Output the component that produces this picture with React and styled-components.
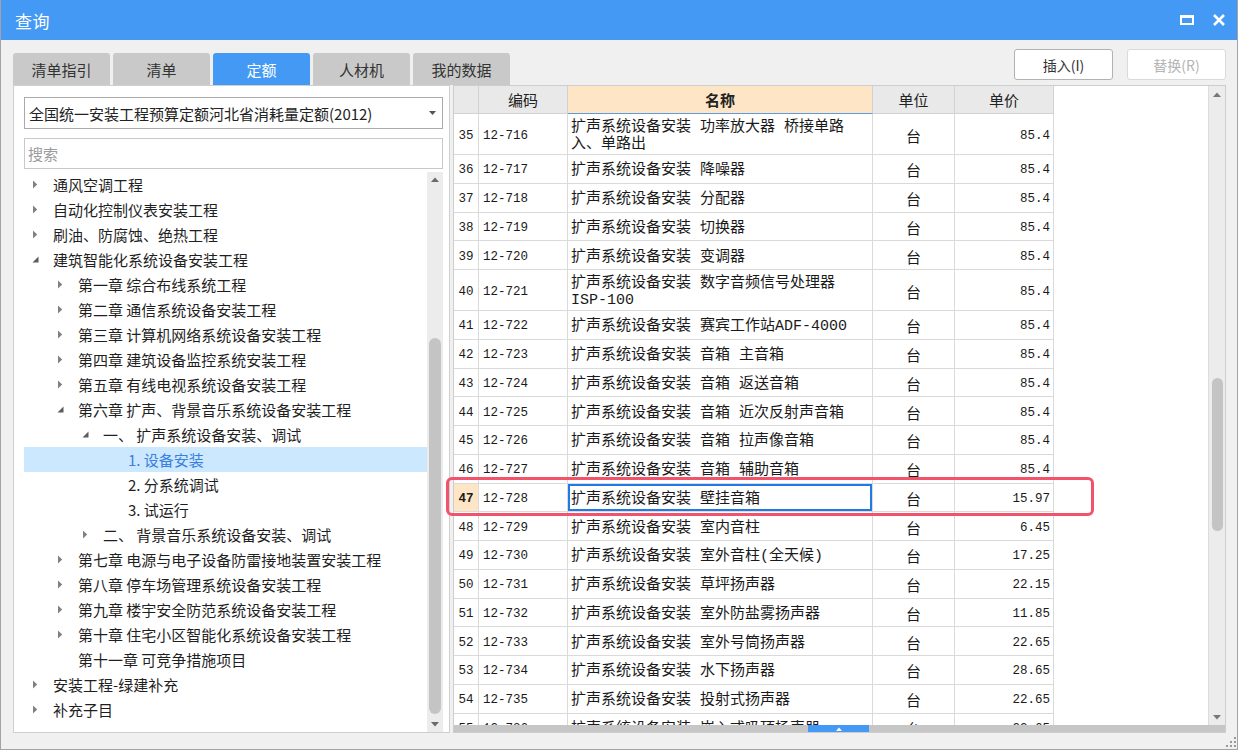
import React from 'react'
import styled, { createGlobalStyle } from 'styled-components'

const GlobalStyle = createGlobalStyle`
  html, body {
    margin: 0;
    padding: 0;
    background: #f0f0f0;
  }
  body {
    font-family: "Noto Sans CJK SC", "Noto Sans", sans-serif;
    color: #222;
  }
  * { box-sizing: border-box; }
`

const Window = styled.div`
  width: 1238px;
  height: 750px;
  display: flex;
  flex-direction: column;
  background: #f0f0f0;
  border: 1px solid #a3a3a3;
  border-top: none;
  overflow: hidden;
  position: relative;
`

const TitleBar = styled.div`
  height: 40px;
  flex: none;
  display: flex;
  align-items: center;
  justify-content: space-between;
  background: #4499f5;
  padding: 0 12px 0 14px;
`

const Title = styled.div`
  color: #fff;
  font-size: 17px;
  letter-spacing: 0.5px;
`

const WinButtons = styled.div`
  display: flex;
  align-items: center;
  gap: 19px;
`

const Body = styled.div`
  flex: 1;
  display: flex;
  flex-direction: column;
  padding: 9px 11px 16px 12px;
  min-height: 0;
`

const TopRow = styled.div`
  height: 36px;
  flex: none;
  display: flex;
  justify-content: space-between;
  align-items: flex-start;
`

const Tabs = styled.div`
  display: flex;
  gap: 3px;
  align-self: flex-end;
`

const Tab = styled.div`
  width: 97px;
  height: 32px;
  display: flex;
  align-items: center;
  justify-content: center;
  font-size: 15px;
  border-radius: 3px 3px 0 0;
  background: ${p => (p.$active ? '#4499f5' : '#c9c9c9')};
  color: ${p => (p.$active ? '#fff' : '#333')};
`

const Actions = styled.div`
  display: flex;
  gap: 14px;
`

const ActionButton = styled.div`
  width: 99px;
  height: 31px;
  display: flex;
  align-items: center;
  justify-content: center;
  font-size: 14px;
  background: #fff;
  border-radius: 3px;
  border: 1px solid ${p => (p.$disabled ? '#dadada' : '#b2b2b2')};
  color: ${p => (p.$disabled ? '#b4b4b4' : '#333')};
`

const Main = styled.div`
  flex: 1;
  display: flex;
  gap: 3px;
  min-height: 0;
  position: relative;
`

const LeftPanel = styled.div`
  width: 437px;
  flex: none;
  display: flex;
  flex-direction: column;
  background: #fff;
  border: 1px solid #cfcfcf;
  padding: 11px 6px 0 10px;
`

const Select = styled.div`
  height: 32px;
  flex: none;
  display: flex;
  align-items: center;
  justify-content: space-between;
  border: 1px solid #aaaaaa;
  padding: 0 6px 0 4px;
  font-size: 15px;
  color: #222;
`

const SearchBox = styled.div`
  height: 31px;
  flex: none;
  margin-top: 9px;
  display: flex;
  align-items: center;
  border: 1px solid #c9c9c9;
  padding-left: 3px;
  font-size: 15px;
  color: #9b9b9b;
`

const TreeArea = styled.div`
  flex: 1;
  display: flex;
  margin-top: 3px;
  min-height: 0;
`

const TreeList = styled.div`
  flex: 1;
  overflow: hidden;
`

const TreeRow = styled.div`
  height: 25px;
  display: flex;
  align-items: center;
  padding-left: ${p => p.$level * 25}px;
  font-size: 15px;
  white-space: nowrap;
  background: ${p => (p.$selected ? '#cce8ff' : 'transparent')};
  color: ${p => (p.$selected ? '#3a80de' : '#1f1f1f')};
`

const Twisty = styled.span`
  width: 22px;
  flex: none;
  display: flex;
  align-items: center;
  justify-content: center;
`

const TreeText = styled.span`
  margin-left: 7px;
`

const ScrollBar = styled.div`
  width: ${p => p.$w}px;
  flex: none;
  display: flex;
  flex-direction: column;
  background: #ececec;
  border-left: ${p => (p.$line ? '1px solid #dcdcdc' : 'none')};
`

const ArrowBox = styled.div`
  height: ${p => p.$h}px;
  flex: none;
  display: flex;
  align-items: center;
  justify-content: center;
`

const Track = styled.div`
  flex: 1;
  display: flex;
  flex-direction: column;
  align-items: center;
  min-height: 0;
`

const Thumb = styled.div`
  width: ${p => p.$w}px;
  height: ${p => p.$h}px;
  margin-top: ${p => p.$top}px;
  border-radius: 6px;
  background: #c4c4c4;
`

const RightPanel = styled.div`
  flex: 1;
  display: flex;
  flex-direction: column;
  background: #fff;
  border: 1px solid #cdcdcd;
  min-width: 0;
`

const GridArea = styled.div`
  flex: 1;
  display: flex;
  min-height: 0;
`

const TableWrap = styled.div`
  flex: 1;
  overflow: hidden;
`

const cols = '25px 89px 305px 82px 99px'

const HeaderRow = styled.div`
  display: grid;
  grid-template-columns: ${cols};
  height: 28px;
`

const HeadCell = styled.div`
  display: flex;
  align-items: center;
  justify-content: center;
  font-size: 15px;
  color: #222;
  background: ${p => (p.$active ? '#fde5c6' : '#e9e9e9')};
  font-weight: ${p => (p.$active ? 700 : 400)};
  border-right: 1px solid #d2d2d2;
  border-bottom: 1px solid ${p => (p.$active ? '#5a9be6' : '#d2d2d2')};
`

const Row = styled.div`
  display: grid;
  grid-template-columns: ${cols};
  height: ${p => p.$h}px;
`

const Cell = styled.div`
  display: flex;
  align-items: center;
  justify-content: ${p => p.$align || 'flex-start'};
  padding: 4px ${p => p.$pr || 3}px 0 ${p => p.$pl || 3}px;
  border-right: 1px solid #dadada;
  border-bottom: 1px solid #dadada;
  overflow: hidden;
  white-space: pre-line;
  line-height: 17px;
  color: #1a1a1a;
`

const NumCell = styled(Cell)`
  font-family: "Liberation Mono", monospace;
  font-size: 12.5px;
  padding: 4px 0 0;
  background: ${p => (p.$current ? '#fde5c6' : '#fff')};
  font-weight: ${p => (p.$current ? 700 : 400)};
`

const MonoCell = styled(Cell)`
  font-family: "Liberation Mono", monospace;
  font-size: 12.5px;
`

const NameCell = styled(Cell)`
  font-family: "Liberation Mono", "Noto Sans CJK SC", monospace;
  font-size: 15px;
  box-shadow: ${p => (p.$focus ? 'inset 0 0 0 2px #1f7ae6' : 'none')};
`

const UnitCell = styled(Cell)`
  font-size: 15px;
  padding-top: 2px;
`

const HScroll = styled.div`
  height: 7px;
  flex: none;
  background: #c6c6c6;
  display: flex;
`

const HThumb = styled.div`
  width: 61px;
  margin-left: 354px;
  background: #4499f5;
  display: flex;
  align-items: center;
  justify-content: center;
`

const Highlight = styled.div`
  position: absolute;
  left: 433px;
  top: 392px;
  width: 648px;
  height: 39px;
  border: 3px solid #f2536b;
  border-radius: 6px;
  pointer-events: none;
`

const Grip = styled.svg`
  position: absolute;
  right: 1px;
  bottom: 2px;
`

const Closed = () => (
  <svg width="6" height="9" viewBox="0 0 6 9">
    <path d="M1 0.5 L5.2 4.5 L1 8.5 Z" fill="#808080" />
  </svg>
)

const Opened = () => (
  <svg width="7" height="7" viewBox="0 0 7 7">
    <path d="M6.5 0.5 L6.5 6.5 L0.5 6.5 Z" fill="#5c5c5c" />
  </svg>
)

const Tri = ({ dir, color = '#6a6a6a', w = 8 }) => (
  <svg width={w} height={w / 2 + 1} viewBox="0 0 8 5">
    {dir === 'up'
      ? <path d="M0 5 L4 0.5 L8 5 Z" fill={color} />
      : <path d="M0 0 L8 0 L4 4.5 Z" fill={color} />}
  </svg>
)

const treeItems = [
  { level: 0, text: '通风空调工程', arrow: 'closed' },
  { level: 0, text: '自动化控制仪表安装工程', arrow: 'closed' },
  { level: 0, text: '刷油、防腐蚀、绝热工程', arrow: 'closed' },
  { level: 0, text: '建筑智能化系统设备安装工程', arrow: 'open' },
  { level: 1, text: '第一章 综合布线系统工程', arrow: 'closed' },
  { level: 1, text: '第二章 通信系统设备安装工程', arrow: 'closed' },
  { level: 1, text: '第三章 计算机网络系统设备安装工程', arrow: 'closed' },
  { level: 1, text: '第四章 建筑设备监控系统安装工程', arrow: 'closed' },
  { level: 1, text: '第五章 有线电视系统设备安装工程', arrow: 'closed' },
  { level: 1, text: '第六章 扩声、背景音乐系统设备安装工程', arrow: 'open' },
  { level: 2, text: '一、 扩声系统设备安装、调试', arrow: 'open' },
  { level: 3, text: '1. 设备安装', selected: true },
  { level: 3, text: '2. 分系统调试' },
  { level: 3, text: '3. 试运行' },
  { level: 2, text: '二、 背景音乐系统设备安装、调试', arrow: 'closed' },
  { level: 1, text: '第七章 电源与电子设备防雷接地装置安装工程', arrow: 'closed' },
  { level: 1, text: '第八章 停车场管理系统设备安装工程', arrow: 'closed' },
  { level: 1, text: '第九章 楼宇安全防范系统设备安装工程', arrow: 'closed' },
  { level: 1, text: '第十章 住宅小区智能化系统设备安装工程', arrow: 'closed' },
  { level: 1, text: '第十一章 可竞争措施项目' },
  { level: 0, text: '安装工程-绿建补充', arrow: 'closed' },
  { level: 0, text: '补充子目', arrow: 'closed' },
]

const P = '扩声系统设备安装 '

const rows = [
  [35, '12-716', P + '功率放大器 桥接单路\n入、单路出', '85.4', true],
  [36, '12-717', P + '降噪器', '85.4'],
  [37, '12-718', P + '分配器', '85.4'],
  [38, '12-719', P + '切换器', '85.4'],
  [39, '12-720', P + '变调器', '85.4'],
  [40, '12-721', P + '数字音频信号处理器\nISP-100', '85.4', true],
  [41, '12-722', P + '赛宾工作站ADF-4000', '85.4'],
  [42, '12-723', P + '音箱 主音箱', '85.4'],
  [43, '12-724', P + '音箱 返送音箱', '85.4'],
  [44, '12-725', P + '音箱 近次反射声音箱', '85.4'],
  [45, '12-726', P + '音箱 拉声像音箱', '85.4'],
  [46, '12-727', P + '音箱 辅助音箱', '85.4'],
  [47, '12-728', P + '壁挂音箱', '15.97'],
  [48, '12-729', P + '室内音柱', '6.45'],
  [49, '12-730', P + '室外音柱(全天候)', '17.25'],
  [50, '12-731', P + '草坪扬声器', '22.15'],
  [51, '12-732', P + '室外防盐雾扬声器', '11.85'],
  [52, '12-733', P + '室外号筒扬声器', '22.65'],
  [53, '12-734', P + '水下扬声器', '28.65'],
  [54, '12-735', P + '投射式扬声器', '22.65'],
  [55, '12-736', P + '嵌入式吸顶扬声器', '22.65'],
]

const App = () => {
  return (
    <Window>
      <GlobalStyle />
      <TitleBar>
        <Title>查询</Title>
        <WinButtons>
          <svg width="14" height="10" viewBox="0 0 14 10">
            <rect x="1" y="1.5" width="12" height="7.5" fill="none" stroke="#fff" strokeWidth="2" />
            <rect x="0" y="0" width="14" height="3" fill="#fff" />
          </svg>
          <svg width="12" height="12" viewBox="0 0 12 12">
            <path d="M1 1 L11 11 M11 1 L1 11" stroke="#fff" strokeWidth="2.6" />
          </svg>
        </WinButtons>
      </TitleBar>

      <Body>
        <TopRow>
          <Tabs>
            <Tab>清单指引</Tab>
            <Tab>清单</Tab>
            <Tab $active>定额</Tab>
            <Tab>人材机</Tab>
            <Tab>我的数据</Tab>
          </Tabs>
          <Actions>
            <ActionButton>插入(I)</ActionButton>
            <ActionButton $disabled>替换(R)</ActionButton>
          </Actions>
        </TopRow>

        <Main>
          <LeftPanel>
            <Select>
              <span>全国统一安装工程预算定额河北省消耗量定额(2012)</span>
              <Tri dir="down" color="#555" w={7} />
            </Select>
            <SearchBox>搜索</SearchBox>
            <TreeArea>
              <TreeList>
                {treeItems.map((t, i) => (
                  <TreeRow key={i} $level={t.level} $selected={t.selected}>
                    <Twisty>
                      {t.arrow === 'closed' && <Closed />}
                      {t.arrow === 'open' && <Opened />}
                    </Twisty>
                    <TreeText>{t.text}</TreeText>
                  </TreeRow>
                ))}
              </TreeList>
              <ScrollBar $w={16}>
                <ArrowBox $h={14}><Tri dir="up" /></ArrowBox>
                <Track>
                  <Thumb $w={12} $h={376} $top={152} />
                </Track>
                <ArrowBox $h={16}><Tri dir="down" /></ArrowBox>
              </ScrollBar>
            </TreeArea>
          </LeftPanel>

          <RightPanel>
            <GridArea>
              <TableWrap>
                <HeaderRow>
                  <HeadCell />
                  <HeadCell>编码</HeadCell>
                  <HeadCell $active>名称</HeadCell>
                  <HeadCell>单位</HeadCell>
                  <HeadCell>单价</HeadCell>
                </HeaderRow>
                {rows.map(([no, code, name, price, tall]) => {
                  const current = no === 47
                  return (
                    <Row key={no} $h={tall ? 41 : 28.75}>
                      <NumCell $align="center" $current={current}>{no}</NumCell>
                      <MonoCell $pl={4}>{code}</MonoCell>
                      <NameCell $focus={current}>{name}</NameCell>
                      <UnitCell $align="center">台</UnitCell>
                      <MonoCell $align="flex-end" $pr={3}>{price}</MonoCell>
                    </Row>
                  )
                })}
              </TableWrap>
              <ScrollBar $w={17} $line>
                <ArrowBox $h={16}><Tri dir="up" color="#777" /></ArrowBox>
                <Track>
                  <Thumb $w={11} $h={153} $top={276} />
                </Track>
                <ArrowBox $h={16}><Tri dir="down" color="#777" /></ArrowBox>
              </ScrollBar>
            </GridArea>
            <HScroll>
              <HThumb>
                <Tri dir="up" color="#fff" w={6} />
              </HThumb>
            </HScroll>
          </RightPanel>

          <Highlight />
        </Main>
      </Body>

      <Grip width="10" height="10" viewBox="0 0 10 10">
        {[[8, 0], [4, 4], [8, 4], [0, 8], [4, 8], [8, 8]].map(([x, y], i) => (
          <rect key={i} x={x} y={y} width="2" height="2" fill="#9a9a9a" />
        ))}
      </Grip>
    </Window>
  )
}

export default App
